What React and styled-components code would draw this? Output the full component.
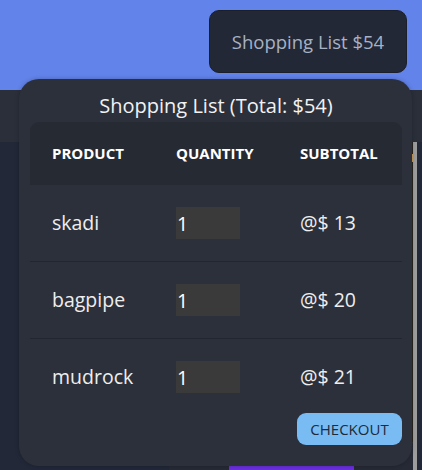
import React from 'react';
import styled, { createGlobalStyle } from 'styled-components';

const GlobalStyle = createGlobalStyle`
  html, body { margin:0; padding:0; }
  body {
    background:#222838;
    font-family:"Open Sans", "Noto Sans", sans-serif;
    color:#ececec;
  }
`;

const items = [
  { name: 'skadi', qty: 1, price: 13 },
  { name: 'bagpipe', qty: 1, price: 20 },
  { name: 'mudrock', qty: 1, price: 21 },
];

export default function App() {
  const total = items.reduce((s, i) => s + i.qty * i.price, 0);
  return (
    <>
      <GlobalStyle />
      <Page>
        <TopBar>
          <CartButton>Shopping List ${total}</CartButton>
        </TopBar>
        <NavBar />
        <Body>
          <ProductCard>
            <CardImage>
              <Corner />
            </CardImage>
            <AddButton>ADD TO CART</AddButton>
          </ProductCard>
        </Body>
        <Cart items={items} total={total} />
      </Page>
    </>
  );
}

const Cart = ({ items, total }) => (
  <Popup>
    <Title>Shopping List (Total: ${total})</Title>
    <Table>
      <thead>
        <tr>
          <Th>Product</Th>
          <Th>Quantity</Th>
          <Th>Subtotal</Th>
        </tr>
      </thead>
      <tbody>
        {items.map((it, i) => (
          <Row key={it.name} last={i === items.length - 1}>
            <Td>{it.name}</Td>
            <Td><QtyInput type="text" defaultValue={it.qty} /></Td>
            <Td>@$ {it.price * it.qty}</Td>
          </Row>
        ))}
      </tbody>
    </Table>
    <Footer>
      <CheckoutButton>CHECKOUT</CheckoutButton>
    </Footer>
  </Popup>
);

const Page = styled.div`
  position:relative;
  height:470px;
  overflow:hidden;
  display:flex;
  flex-direction:column;
`;

const TopBar = styled.header`
  height:90px;
  flex-shrink:0;
  box-sizing:border-box;
  background:#6283ea;
  display:flex;
  justify-content:flex-end;
  align-items:flex-start;
  padding:10px 15px 0 0;
`;

const CartButton = styled.button`
  width:198px;
  height:63px;
  background:#222836;
  border:1px solid #1b1f2a;
  border-radius:10px;
  color:#a7b1c4;
  font-family:inherit;
  font-size:18.5px;
  cursor:pointer;
`;

const NavBar = styled.nav`
  height:52px;
  flex-shrink:0;
  background:#2b2f3a;
`;

const Body = styled.main`
  flex:1;
  display:flex;
  justify-content:flex-end;
  padding:0 5px 0 0;
  background:#222838;
`;

const ProductCard = styled.div`
  width:244px;
  display:flex;
  flex-direction:column;
  align-items:center;
  border-right:4px solid #9d9d9d;
  background:#262a35;
`;

const CardImage = styled.div`
  position:relative;
  width:100%;
  height:300px;
  background:#2a2622;
  border-bottom:1px solid #333;
`;

const Corner = styled.div`
  position:absolute;
  right:0;
  top:12px;
  width:6px;
  height:8px;
  background:#c89a58;
`;

const AddButton = styled.button`
  margin-top:20px;
  width:125px;
  height:30px;
  background:#6a2fe0;
  color:#fff;
  border:none;
  font-family:inherit;
  font-size:16px;
`;

const Popup = styled.section`
  position:absolute;
  top:79px;
  left:19px;
  width:393px;
  box-sizing:border-box;
  padding:14px 10px 21px 11px;
  background:#2c303b;
  border-radius:20px;
  box-shadow:0 0 4px rgba(0,0,0,0.25);
`;

const Title = styled.h2`
  margin:0 0 4px;
  text-align:center;
  font-size:20px;
  line-height:25px;
  font-weight:400;
  color:#f2f2f2;
`;

const Table = styled.table`
  width:100%;
  border-collapse:collapse;
  table-layout:fixed;
`;

const Th = styled.th`
  text-align:left;
  padding:22px 0 22px 22px;
  background:#262a33;
  color:#fff;
  font-size:15px;
  line-height:19px;
  font-weight:700;
  text-transform:uppercase;
  white-space:nowrap;
  &:first-child{ border-top-left-radius:9px; }
  &:last-child{ border-top-right-radius:9px; }
`;

const Row = styled.tr`
  border-bottom:${p => (p.last ? 'none' : '1px solid #23262e')};
`;

const Td = styled.td`
  padding:22px 0 22px 22px;
  font-size:19.5px;
  line-height:32px;
  color:#eeeeee;
`;

const QtyInput = styled.input`
  display:block;
  width:64px;
  height:32px;
  box-sizing:border-box;
  padding:0 1px;
  border:none;
  outline:none;
  background:#3a3a3a;
  color:#fff;
  font-family:inherit;
  font-size:19.5px;
`;

const Footer = styled.div`
  display:flex;
  justify-content:flex-end;
  margin-top:-2px;
`;

const CheckoutButton = styled.button`
  width:105px;
  height:32px;
  padding:0;
  background:#79bcf3;
  color:#1d2a3a;
  border:none;
  border-radius:9px;
  font-family:inherit;
  font-size:15px;
  font-weight:500;
  cursor:pointer;
`;
